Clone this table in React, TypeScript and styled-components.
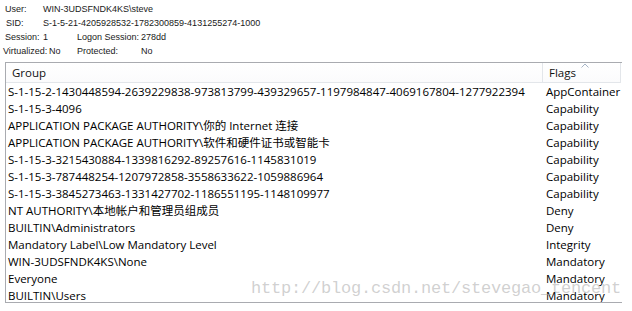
import React from 'react';
import styled, { createGlobalStyle } from 'styled-components';

const GlobalStyle = createGlobalStyle`
  html, body {
    margin: 0;
    padding: 0;
    background: #ffffff;
  }
`;

const Page = styled.div`
  position: relative;
  width: 632px;
  height: 311px;
  overflow: hidden;
  background: #ffffff;
`;

const Info = styled.div`
  padding-top: 2px;
  font-family: 'Liberation Sans', Arial, sans-serif;
  font-size: 9px;
  color: #1a1a1a;
`;

const InfoRow = styled.div<{ $indent?: number }>`
  display: flex;
  height: 14px;
  line-height: 14px;
  padding-left: ${p => p.$indent ?? 5}px;
  white-space: nowrap;
`;

const Cell = styled.span<{ $w?: number }>`
  display: inline-block;
  width: ${p => (p.$w ? `${p.$w}px` : 'auto')};
`;

const ListBox = styled.div`
  margin: 4px 0 0 5px;
  width: 617px;
  height: 241px;
  box-sizing: border-box;
  border: 1px solid #a9abb0;
  border-right: none;
  overflow: hidden;
  font-family: 'Open Sans', 'Noto Sans CJK SC', sans-serif;
  font-size: 11.5px;
  color: #000;
`;

const Grid = styled.div`
  display: grid;
  grid-template-columns: 537px 78px;
`;

const HeadCell = styled.div<{ $pad: number }>`
  position: relative;
  height: 19px;
  line-height: 19px;
  padding-left: ${p => p.$pad}px;
  border-right: 1px solid #e3e6ea;
  border-bottom: 1px solid #e3e6ea;
  background: linear-gradient(#ffffff, #fbfbfc);
  color: #1e395b;
  color: #111;
`;

const SortArrow = styled.svg`
  position: absolute;
  left: 38px;
  top: 0px;
`;

const DataCell = styled.div<{ $pad: number }>`
  height: 17px;
  line-height: 17px;
  padding-left: ${p => p.$pad}px;
  white-space: nowrap;
  overflow: hidden;
`;

const Watermark = styled.div`
  position: absolute;
  left: 251px;
  top: 279px;
  font-family: 'Liberation Mono', 'Courier New', monospace;
  font-size: 17px;
  letter-spacing: -0.2px;
  color: rgba(170, 170, 170, 0.55);
  white-space: nowrap;
  pointer-events: none;
`;

const rows: [string, string][] = [
  ['S-1-15-2-1430448594-2639229838-973813799-439329657-1197984847-4069167804-1277922394', 'AppContainer'],
  ['S-1-15-3-4096', 'Capability'],
  ['APPLICATION PACKAGE AUTHORITY\\你的 Internet 连接', 'Capability'],
  ['APPLICATION PACKAGE AUTHORITY\\软件和硬件证书或智能卡', 'Capability'],
  ['S-1-15-3-3215430884-1339816292-89257616-1145831019', 'Capability'],
  ['S-1-15-3-787448254-1207972858-3558633622-1059886964', 'Capability'],
  ['S-1-15-3-3845273463-1331427702-1186551195-1148109977', 'Capability'],
  ['NT AUTHORITY\\本地帐户和管理员组成员', 'Deny'],
  ['BUILTIN\\Administrators', 'Deny'],
  ['Mandatory Label\\Low Mandatory Level', 'Integrity'],
  ['WIN-3UDSFNDK4KS\\None', 'Mandatory'],
  ['Everyone', 'Mandatory'],
  ['BUILTIN\\Users', 'Mandatory'],
];

const App: React.FC = () => {
  return (
    <Page>
      <GlobalStyle />
      <Info>
        <InfoRow>
          <Cell $w={38}>User:</Cell>
          <Cell>WIN-3UDSFNDK4KS\steve</Cell>
        </InfoRow>
        <InfoRow $indent={6}>
          <Cell $w={37}>SID:</Cell>
          <Cell>S-1-5-21-4205928532-1782300859-4131255274-1000</Cell>
        </InfoRow>
        <InfoRow>
          <Cell $w={38}>Session:</Cell>
          <Cell $w={34}>1</Cell>
          <Cell $w={64}>Logon Session:</Cell>
          <Cell>278dd</Cell>
        </InfoRow>
        <InfoRow $indent={3}>
          <Cell $w={46}>Virtualized:</Cell>
          <Cell $w={28}>No</Cell>
          <Cell $w={64}>Protected:</Cell>
          <Cell>No</Cell>
        </InfoRow>
      </Info>
      <ListBox>
        <Grid>
          <HeadCell $pad={6}>Group</HeadCell>
          <HeadCell $pad={6}>
            Flags
            <SortArrow width="8" height="5" viewBox="0 0 8 5">
              <path d="M0.5 4.5 L4 1 L7.5 4.5" fill="none" stroke="#a6b4c6" strokeWidth="1" />
            </SortArrow>
          </HeadCell>
          {rows.map(([group, flag], i) => (
            <React.Fragment key={i}>
              <DataCell $pad={2}>{group}</DataCell>
              <DataCell $pad={3}>{flag}</DataCell>
            </React.Fragment>
          ))}
        </Grid>
      </ListBox>
      <Watermark>http://blog.csdn.net/stevegao_tencent</Watermark>
    </Page>
  );
};

export default App;
